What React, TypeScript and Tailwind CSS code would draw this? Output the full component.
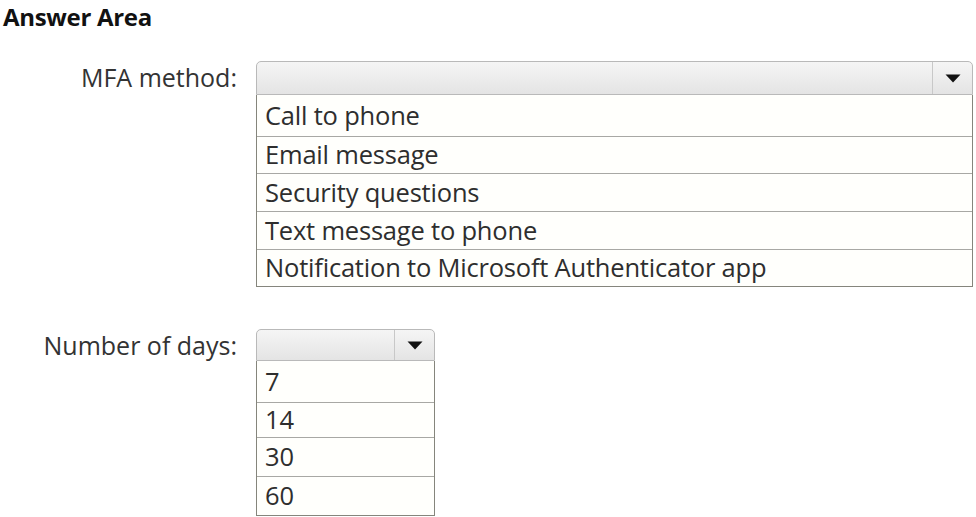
import React from "react";

const font = { fontFamily: '"Open Sans", "Noto Sans", Arial, sans-serif' };

function Arrow() {
  return (
    <svg width="16" height="9" viewBox="0 0 16 9">
      <path d="M0.5 0.5 L15.5 0.5 L8 8.5 Z" fill="#111" />
    </svg>
  );
}

function Select({
  width,
  items,
  boxH,
  rowHs,
}: {
  width: number;
  items: string[];
  boxH: string;
  rowHs: string[];
}) {
  return (
    <div className="flex flex-col" style={{ width }}>
      <div className={`flex ${boxH} rounded-t-[5px] border border-[#b9b9b9] bg-gradient-to-b from-[#f5f5f5] to-[#e4e4e4]`}>
        <div className="flex-1" />
        <div className="flex w-[40px] items-center justify-center border-l border-[#c8c8c8]">
          <Arrow />
        </div>
      </div>
      <div className="flex flex-col border border-t-0 border-[#85857c] bg-[#fffffc]">
        {items.map((t, i) => (
          <div
            key={t}
            className={`flex ${rowHs[i]} items-center pl-[8px] text-[25.5px] leading-none tracking-[-0.2px] text-[#2e2e2e] ${i > 0 ? "border-t border-[#a8a8a4]" : ""}`}
          >
            {t}
          </div>
        ))}
      </div>
    </div>
  );
}

export default function App() {
  return (
    <div className="h-[517px] w-[976px] overflow-hidden bg-white" style={font}>
      <div className="pl-[3px] pt-[3px] text-[24px] font-bold leading-[27px] tracking-[-0.3px] text-[#111]">Answer Area</div>
      <div className="mt-[31px] flex items-start">
        <div className="flex h-[33px] w-[237px] items-center justify-end text-[25px] text-[#333]">MFA method:</div>
        <div className="ml-[19px]">
          <Select
            width={717}
            boxH="h-[34px]"
            rowHs={["h-[41px]", "h-[37px]", "h-[38px]", "h-[38px]", "h-[37px]"]}
            items={[
              "Call to phone",
              "Email message",
              "Security questions",
              "Text message to phone",
              "Notification to Microsoft Authenticator app",
            ]}
          />
        </div>
      </div>
      <div className="mt-[42px] flex items-start">
        <div className="flex h-[33px] w-[237px] items-center justify-end text-[25px] text-[#333]">Number of days:</div>
        <div className="ml-[19px]">
          <Select
            width={179}
            boxH="h-[32px]"
            rowHs={["h-[41px]", "h-[35px]", "h-[39px]", "h-[39px]"]}
            items={["7", "14", "30", "60"]}
          />
        </div>
      </div>
    </div>
  );
}
